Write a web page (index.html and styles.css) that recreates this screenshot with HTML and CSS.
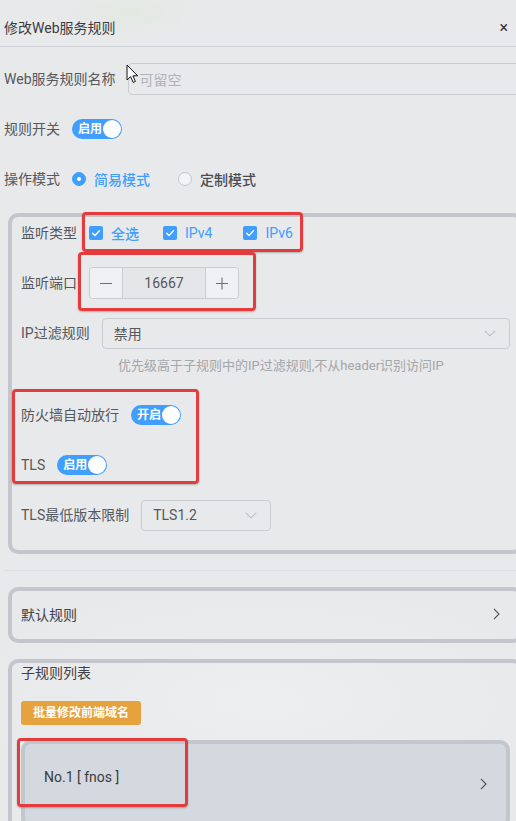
FILE: index.html
```html
<!DOCTYPE html>
<html lang="zh-CN">
<head>
<meta charset="utf-8">
<title>修改Web服务规则</title>
<link rel="stylesheet" href="styles.css">
</head>
<body>
<div class="dialog">
  <div class="header">
    <span class="title">修改Web服务规则</span>
    <span class="close">×</span>
  </div>
  <div class="form">
    <div class="row">
      <span class="label">Web服务规则名称</span>
      <div class="input"><span class="placeholder">可留空</span></div>
    </div>
    <div class="row">
      <span class="label">规则开关</span>
      <span class="switch"><span class="switch-text">启用</span><span class="knob"></span></span>
    </div>
    <div class="row">
      <span class="label">操作模式</span>
      <span class="radio is-checked"><span class="radio-inner"></span><span class="radio-label">简易模式</span></span>
      <span class="radio"><span class="radio-inner"></span><span class="radio-label">定制模式</span></span>
    </div>

    <div class="panel panel-main">
      <div class="row">
        <span class="label">监听类型</span>
        <span class="check check-first"><span class="check-box"><svg viewBox="0 0 14 14" width="14" height="14"><path d="M3.6 7.2 L6 9.4 L10.4 4.8" fill="none" stroke="#fff" stroke-width="1.4" stroke-linecap="round" stroke-linejoin="round"/></svg></span><span class="check-label check-label-cjk">全选</span></span>
        <span class="check"><span class="check-box"><svg viewBox="0 0 14 14" width="14" height="14"><path d="M3.6 7.2 L6 9.4 L10.4 4.8" fill="none" stroke="#fff" stroke-width="1.4" stroke-linecap="round" stroke-linejoin="round"/></svg></span><span class="check-label">IPv4</span></span>
        <span class="check"><span class="check-box"><svg viewBox="0 0 14 14" width="14" height="14"><path d="M3.6 7.2 L6 9.4 L10.4 4.8" fill="none" stroke="#fff" stroke-width="1.4" stroke-linecap="round" stroke-linejoin="round"/></svg></span><span class="check-label">IPv6</span></span>
      </div>
      <div class="row">
        <span class="label">监听端口</span>
        <div class="number">
          <span class="num-btn num-minus"><svg viewBox="0 0 14 14" width="14" height="14"><path d="M1 7.5 H13" stroke="#6b6e73" stroke-width="1.1"/></svg></span>
          <span class="num-value">16667</span>
          <span class="num-btn num-plus"><svg viewBox="0 0 14 14" width="14" height="14"><path d="M1 7.5 H13 M7 1.5 V13.5" stroke="#6b6e73" stroke-width="1.1"/></svg></span>
        </div>
      </div>
      <div class="row row-tight">
        <span class="label">IP过滤规则</span>
        <div class="select select-wide">
          <span class="select-value">禁用</span>
          <svg class="select-arrow" viewBox="0 0 12 7" width="12" height="7"><path d="M0.8 0.8 L6 5.8 L11.2 0.8" fill="none" stroke="#b9bdc4" stroke-width="1.1"/></svg>
        </div>
      </div>
      <div class="hint">优先级高于子规则中的IP过滤规则,不从header识别访问IP</div>
      <div class="row">
        <span class="label">防火墙自动放行</span>
        <span class="switch"><span class="switch-text">开启</span><span class="knob"></span></span>
      </div>
      <div class="row">
        <span class="label">TLS</span>
        <span class="switch"><span class="switch-text">启用</span><span class="knob"></span></span>
      </div>
      <div class="row row-last">
        <span class="label">TLS最低版本限制</span>
        <div class="select select-small">
          <span class="select-value">TLS1.2</span>
          <svg class="select-arrow" viewBox="0 0 12 7" width="12" height="7"><path d="M0.8 0.8 L6 5.8 L11.2 0.8" fill="none" stroke="#b9bdc4" stroke-width="1.1"/></svg>
        </div>
      </div>
    </div>

    <div class="divider"></div>

    <div class="panel panel-link">
      <span class="link-text">默认规则</span>
      <svg class="chevron" viewBox="0 0 7 12" width="7" height="12"><path d="M1 1 L6 6 L1 11" fill="none" stroke="#55585d" stroke-width="1.1"/></svg>
    </div>

    <div class="panel panel-sub">
      <div class="sub-title">子规则列表</div>
      <span class="btn-warning">批量修改前端域名</span>
      <div class="card">
        <span class="card-text">No.1 [ fnos ]</span>
        <svg class="chevron chevron-card" viewBox="0 0 7 12" width="7" height="12"><path d="M1 1 L6 6 L1 11" fill="none" stroke="#55585d" stroke-width="1.1"/></svg>
      </div>
    </div>
  </div>

  <div class="mark mark-types"></div>
  <div class="mark mark-port"></div>
  <div class="mark mark-switches"></div>
  <div class="mark mark-card"></div>

  <svg class="cursor" viewBox="0 0 13 20" width="13" height="20"><path d="M1 1 L1 16 L4.6 12.6 L7.2 18.4 L9.4 17.4 L6.9 11.8 L11.6 11.8 Z" fill="#fff" stroke="#111" stroke-width="1" stroke-linejoin="round"/></svg>
</div>
</body>
</html>
```

FILE: styles.css
```css
html, body {
  margin: 0;
  padding: 0;
  overflow: hidden;
}

body {
  background:
    radial-gradient(ellipse 60px 22px at 130px 12px, rgba(214, 232, 206, 0.35), rgba(214, 232, 206, 0) 100%),
    radial-gradient(ellipse 300px 120px at 260px 700px, rgba(240, 241, 243, 0.6), rgba(240, 241, 243, 0) 100%),
    #e8e9ea;
  font-family: Roboto, "Noto Sans CJK SC", "Noto Sans", sans-serif;
  font-size: 14px;
  color: #55585d;
  width: 516px;
  height: 821px;
}

.dialog {
  position: relative;
  width: 540px;
}

.header {
  display: flex;
  align-items: center;
  padding: 18px 32px 8px 4px;
  border-bottom: 1px solid #cdd0d4;
  line-height: 20px;
}

.title {
  color: #3a3c40;
  font-size: 14px;
}

.close {
  margin-left: auto;
  font-size: 16px;
  color: #333;
  line-height: 20px;
}

.form {
  padding: 16px 0 0 4px;
}

.row {
  display: flex;
  align-items: center;
  height: 32px;
  margin-bottom: 18px;
}

.row-tight {
  margin-bottom: 8px;
}

.row-last {
  margin-bottom: 0;
}

.label {
  color: #55585d;
  margin-right: 12px;
  white-space: nowrap;
  line-height: 20px;
}

.input {
  flex: 1;
  height: 32px;
  box-sizing: border-box;
  border: 1px solid #c9ccd1;
  border-radius: 4px;
  display: flex;
  align-items: center;
  padding-left: 11px;
}

.placeholder {
  color: #b0b3b9;
}

/* switch */
.switch {
  position: relative;
  display: inline-flex;
  align-items: center;
  width: 50px;
  height: 20px;
  border-radius: 10px;
  background: #409eff;
  box-sizing: border-box;
}

.switch-text {
  color: #fff;
  font-size: 12px;
  font-weight: 700;
  padding-left: 6px;
  line-height: 20px;
}

.knob {
  position: absolute;
  right: 1px;
  top: 1px;
  width: 18px;
  height: 18px;
  border-radius: 50%;
  background: #fff;
}

/* radio */
.radio {
  display: inline-flex;
  align-items: center;
  margin-right: 28px;
}

.radio-inner {
  width: 14px;
  height: 14px;
  box-sizing: border-box;
  border-radius: 50%;
  border: 1px solid #c3c6cc;
  background: #f2f3f5;
  margin-right: 8px;
  display: inline-flex;
  align-items: center;
  justify-content: center;
}

.radio.is-checked .radio-inner {
  background: #409eff;
  border-color: #409eff;
}

.radio.is-checked .radio-inner::after {
  content: "";
  width: 4px;
  height: 4px;
  border-radius: 50%;
  background: #fff;
}

.radio-label {
  color: #4a4c50;
  font-weight: 500;
}

.radio.is-checked .radio-label {
  color: #409eff;
}

/* panels */
.panel {
  margin-left: 4px;
  width: 515px;
  box-sizing: border-box;
  border: 4px solid #c3c6cd;
  border-radius: 10px;
}

.panel-main {
  padding: 0 9px 19px 9px;
}

.check {
  display: inline-flex;
  align-items: center;
  margin-right: 31px;
}

.check-first {
  margin-right: 24px;
}

.check-box {
  width: 14px;
  height: 14px;
  border-radius: 2px;
  background: #409eff;
  display: inline-flex;
  margin-right: 8px;
}

.check-label {
  color: #409eff;
  font-weight: 400;
}

.check-label-cjk {
  font-weight: 500;
}

/* number input */
.number {
  display: flex;
  width: 150px;
  height: 32px;
  box-sizing: border-box;
  border: 1px solid #c9ccd1;
  border-radius: 4px;
  overflow: hidden;
}

.num-btn {
  width: 32px;
  display: flex;
  align-items: center;
  justify-content: center;
  background: #eef0f3;
}

.num-minus {
  border-right: 1px solid #c9ccd1;
}

.num-plus {
  border-left: 1px solid #c9ccd1;
}

.num-value {
  flex: 1;
  display: flex;
  align-items: center;
  justify-content: center;
  color: #55585d;
  background: #e5e6e8;
}

/* select */
.select {
  height: 31px;
  box-sizing: border-box;
  border: 1px solid #c9ccd1;
  border-radius: 4px;
  display: flex;
  align-items: center;
  padding: 0 13px 0 11px;
}

.select-wide {
  flex: 1;
}

.select-small {
  width: 130px;
}

.select-value {
  color: #55585d;
}

.select-arrow {
  margin-left: auto;
}

.hint {
  font-size: 13px;
  line-height: 18px;
  color: #a3a6ab;
  padding-left: 97px;
  margin-bottom: 24px;
}

.divider {
  height: 1px;
  background: #dcdee2;
  margin: 16px 0 16px 0;
  width: 520px;
}

.panel-link {
  height: 56px;
  display: flex;
  align-items: center;
  padding: 0 19px 2px 9px;
  margin-bottom: 16px;
}

.link-text {
  color: #3f4145;
}

.chevron {
  margin-left: auto;
}

.panel-sub {
  padding: 0 9px 0 9px;
  border-bottom: none;
  border-radius: 10px 10px 0 0;
}

.sub-title {
  color: #3f4145;
  line-height: 20px;
}

.btn-warning {
  display: inline-block;
  margin-top: 18px;
  height: 24px;
  line-height: 24px;
  padding: 0 12px;
  border-radius: 3px;
  background: #e6a23c;
  color: #fff;
  font-size: 12px;
  font-weight: 700;
}

.card {
  margin-top: 15px;
  height: 88px;
  box-sizing: border-box;
  border: 4px solid #c2c7ce;
  border-radius: 10px;
  background: #d4d9e0;
  display: flex;
  align-items: center;
  padding: 0 19px 0 19px;
}

.card-text {
  color: #3a3c40;
  padding-bottom: 14px;
}

/* annotation overlays */
.mark {
  position: absolute;
  border: 3px solid #e63b3c;
  border-radius: 4px;
  box-sizing: border-box;
  box-shadow: 0 1px 2px rgba(0, 0, 0, 0.25);
}

.mark-types {
  left: 82px;
  top: 212px;
  width: 221px;
  height: 40px;
}

.mark-port {
  left: 78px;
  top: 252px;
  width: 178px;
  height: 59px;
}

.mark-switches {
  left: 12px;
  top: 389px;
  width: 187px;
  height: 95px;
}

.mark-card {
  left: 17px;
  top: 738px;
  width: 171px;
  height: 69px;
}

.cursor {
  position: absolute;
  left: 126px;
  top: 64px;
}
```
